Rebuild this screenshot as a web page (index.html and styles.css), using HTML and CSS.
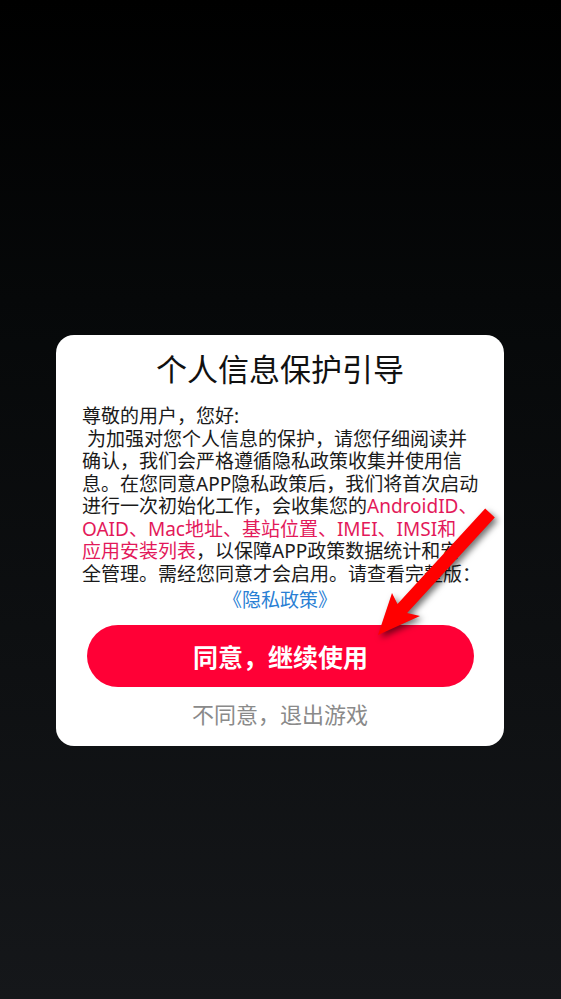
FILE: index.html
```html
<!DOCTYPE html>
<html lang="zh-CN">
<head>
<meta charset="utf-8">
<title>个人信息保护引导</title>
<link rel="stylesheet" href="styles.css">
</head>
<body>
<div class="screen">
  <div class="card">
    <h1 class="title">个人信息保护引导</h1>
    <p class="body">尊敬的用户，您好:<br>&nbsp;为加强对您个人信息的保护，请您仔细阅读并<br>确认，我们会严格遵循隐私政策收集并使用信<br>息。在您同意APP隐私政策后，我们将首次启动<br>进行一次初始化工作，会收集您的<span class="hl">AndroidID、</span><br><span class="hl">OAID、Mac地址、基站位置、IMEI、IMSI和</span><br><span class="hl">应用安装列表</span>，以保障APP政策数据统计和安<br>全管理。需经您同意才会启用。请查看完整版：</p>
    <p class="link">《隐私政策》</p>
    <div class="btn">同意，继续使用</div>
    <div class="decline">不同意，退出游戏</div>
  </div>
</div>
<svg class="arrow" width="561" height="999" viewBox="0 0 561 999">
  <polygon points="485.2,508.6 494.8,517.4 407.1,612.9 420,616 378,635 392,593 397.5,604.1" fill="#ff0000"/>
</svg>
</body>
</html>
```
FILE: styles.css
```css
html, body {
  margin: 0;
  padding: 0;
}
body {
  width: 561px;
  height: 999px;
  overflow: hidden;
  background: linear-gradient(to bottom, #000000 0%, #060809 30%, #15171a 100%);
  font-family: "Noto Sans", "Noto Sans CJK SC", sans-serif;
}
.screen {
  padding-top: 335px;
}
.card {
  width: 448px;
  margin-left: 56px;
  box-sizing: border-box;
  background: #ffffff;
  border-radius: 18px;
  padding: 15px 0 19px;
}
.title {
  margin: 0;
  text-align: center;
  font-size: 31px;
  line-height: 36px;
  font-weight: 400;
  color: #111;
  font-family: "Noto Sans CJK SC", sans-serif;
}
.body {
  margin: 19px 0 0;
  padding: 0 26px;
  font-size: 19px;
  line-height: 22.5px;
  color: #1a1a1a;
  white-space: nowrap;
}
.hl {
  color: #e3195a;
}
.link {
  margin: 4px 0 0;
  text-align: center;
  font-size: 19px;
  line-height: 22.5px;
  color: #2a7fd4;
}
.btn {
  margin: 13px 30px 0 31px;
  height: 62px;
  border-radius: 31px;
  background: #ff0036;
  color: #fff;
  font-weight: 700;
  font-size: 25px;
  display: flex;
  align-items: center;
  justify-content: center;
  font-family: "Noto Sans CJK SC", sans-serif;
}
.decline {
  margin-top: 12px;
  text-align: center;
  font-size: 22px;
  line-height: 28px;
  color: #8a8a8a;
  font-family: "Noto Sans CJK SC", sans-serif;
}
.arrow {
  position: absolute;
  left: 0;
  top: 0;
  pointer-events: none;
  filter: drop-shadow(3px 3px 3px rgba(0, 0, 0, 0.55));
}
```
